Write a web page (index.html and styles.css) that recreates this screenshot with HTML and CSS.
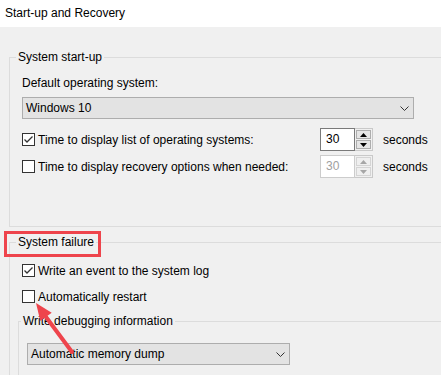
FILE: index.html
```html
<!DOCTYPE html>
<html lang="en">
    <head>
        <meta charset="UTF-8" />
        <meta name="viewport" content="width=device-width, initial-scale=1.0" />
        <title>Start-up and Recovery</title>
        <link rel="stylesheet" href="styles.css">
    </head>
    <body>
        <div class="dialog">
            <div class="title_bar">Start-up and Recovery</div>

            <div class="dialog_body">
                <!-- 시스템 시작 -->
                <div class="group group_startup">
                    <div class="group_title">System start-up</div>
                    <div class="field_label">Default operating system:</div>
                    <div class="combo combo_os">
                        <span>Windows 10</span>
                        <svg class="chevron" width="9" height="5" viewBox="0 0 9 5">
                            <path d="M0.5 0.5 L4.5 4.5 L8.5 0.5" fill="none" stroke="#333" stroke-width="1" />
                        </svg>
                    </div>

                    <div class="time_grid">
                        <div class="check_row">
                            <span class="check">
                                <svg width="11" height="11" viewBox="0 0 11 11">
                                    <path d="M1.5 5.5 L4 8 L9.5 2.5" fill="none" stroke="#333" stroke-width="1.3" />
                                </svg>
                            </span>
                            <span>Time to display list of operating systems:</span>
                        </div>
                        <div class="spin">
                            <div class="spin_value">30</div>
                            <div class="spin_btns">
                                <span class="spin_btn">
                                    <svg width="7" height="4" viewBox="0 0 7 4"><path d="M0 4 L3.5 0 L7 4 Z" fill="#000" /></svg>
                                </span>
                                <span class="spin_btn">
                                    <svg width="7" height="4" viewBox="0 0 7 4"><path d="M0 0 L3.5 4 L7 0 Z" fill="#000" /></svg>
                                </span>
                            </div>
                        </div>
                        <span>seconds</span>

                        <div class="check_row">
                            <span class="check"></span>
                            <span>Time to display recovery options when needed:</span>
                        </div>
                        <div class="spin disabled">
                            <div class="spin_value">30</div>
                            <div class="spin_btns">
                                <span class="spin_btn">
                                    <svg width="7" height="4" viewBox="0 0 7 4"><path d="M0 4 L3.5 0 L7 4 Z" fill="#a6a6a6" /></svg>
                                </span>
                                <span class="spin_btn">
                                    <svg width="7" height="4" viewBox="0 0 7 4"><path d="M0 0 L3.5 4 L7 0 Z" fill="#a6a6a6" /></svg>
                                </span>
                            </div>
                        </div>
                        <span>seconds</span>
                    </div>
                </div>

                <!-- 시스템 오류 -->
                <div class="group group_failure">
                    <div class="group_title">System failure</div>
                    <div class="check_row row_event">
                        <span class="check">
                            <svg width="11" height="11" viewBox="0 0 11 11">
                                <path d="M1.5 5.5 L4 8 L9.5 2.5" fill="none" stroke="#333" stroke-width="1.3" />
                            </svg>
                        </span>
                        <span>Write an event to the system log</span>
                    </div>
                    <div class="check_row row_restart">
                        <span class="check"></span>
                        <span>Automatically restart</span>
                    </div>

                    <div class="group group_debug">
                        <div class="group_title">Write debugging information</div>
                        <div class="combo combo_dump">
                            <span>Automatic memory dump</span>
                            <svg class="chevron" width="9" height="5" viewBox="0 0 9 5">
                                <path d="M0.5 0.5 L4.5 4.5 L8.5 0.5" fill="none" stroke="#333" stroke-width="1" />
                            </svg>
                        </div>
                    </div>
                </div>
            </div>

            <!-- 강조 표시 -->
            <div class="mark_box"></div>
            <svg class="mark_arrow" width="48" height="58" viewBox="0 0 48 58">
                <line x1="16" y1="19" x2="42" y2="54" stroke="#ee444c" stroke-width="4" stroke-linecap="round" />
                <path d="M6 5 L21.7 14.7 L10.3 22.9 Z" fill="#ee444c" />
            </svg>
        </div>
    </body>
</html>
```

FILE: styles.css
```css
* {
    margin: 0px;
    padding: 0px;
    box-sizing: border-box;
}

html,
body {
    overflow: hidden;
}

body {
    font-family: "Liberation Sans", Arial, sans-serif;
    font-size: 12px;
    line-height: 16px;
    color: #000;
    background-color: #f0f0f0;
}

.dialog {
    position: relative;
    width: 441px;
    height: 375px;
    overflow: hidden;
    background-color: #f0f0f0;
}

.title_bar {
    height: 27px;
    padding: 5px 0 0 5px;
    background-color: #fff;
}

.dialog_body {
    margin-right: -40px;
    padding: 30px 0 0 9px;
}

/* 그룹 박스 (오른쪽은 화면 밖으로 이어짐) */
.group {
    border-top: 1px solid #dcdcdc;
    border-bottom: 1px solid #dcdcdc;
    border-left: 1px solid #dcdcdc;
    padding-left: 12px;
}

.group_title {
    display: table;
    margin: -9px 0 0 -6px;
    padding: 0 2px;
    background-color: #f0f0f0;
    line-height: 16px;
}

.group_startup {
    padding-bottom: 48px;
}

.group_failure {
    margin-top: 15px;
    padding-bottom: 40px;
}

.group_debug {
    margin: 16px 0 0 -4px;
    padding-left: 8px;
    padding-bottom: 20px;
}

.field_label {
    margin-top: 10px;
}

/* 콤보 박스 */
.combo {
    display: flex;
    align-items: center;
    justify-content: space-between;
    height: 22px;
    padding: 0 4px 0 3px;
    border: 1px solid #adadad;
    background-color: #e3e3e3;
    line-height: 20px;
}

.combo_os {
    width: 392px;
    margin-top: 6px;
}

.combo_dump {
    width: 263px;
    margin-top: 14px;
}

.chevron {
    display: block;
}

/* 체크박스 */
.check_row {
    display: flex;
    align-items: center;
    gap: 3px;
}

.check {
    display: flex;
    align-items: center;
    justify-content: center;
    width: 13px;
    height: 13px;
    border: 1px solid #333;
    background-color: #fff;
    flex-shrink: 0;
}

.check svg {
    display: block;
}

.row_event {
    height: 17px;
    margin-top: 12px;
}

.row_restart {
    height: 17px;
    margin-top: 9px;
}

/* 시간 설정 */
.time_grid {
    display: grid;
    grid-template-columns: 288px 53px auto;
    grid-auto-rows: 23px;
    column-gap: 10px;
    row-gap: 4px;
    align-items: center;
    margin-top: 9px;
}

.spin {
    display: flex;
    width: 53px;
    height: 23px;
}

.spin_value {
    width: 35px;
    height: 23px;
    padding-left: 5px;
    border: 1px solid #7a7a7a;
    background-color: #fff;
    line-height: 21px;
}

.spin_btns {
    display: flex;
    flex-direction: column;
    gap: 1px;
    width: 18px;
    height: 23px;
    padding: 1px;
    border: 1px solid #c9c9c9;
    border-left: none;
}

.spin_btn {
    flex: 1;
    display: flex;
    align-items: center;
    justify-content: center;
    border: 1px solid #adadad;
    background-color: #e5e5e5;
}

.spin_btn svg {
    display: block;
}

.spin.disabled .spin_value {
    border-color: #cccccc;
    color: #a0a0a0;
}

.spin.disabled .spin_btn {
    border-color: #d4d4d4;
    background-color: #efefef;
}

/* 빨간 표시 */
.mark_box {
    position: absolute;
    left: 4px;
    top: 231px;
    width: 97px;
    height: 26px;
    border: 3px solid #ee444c;
}

.mark_arrow {
    position: absolute;
    left: 30px;
    top: 298px;
}
```
